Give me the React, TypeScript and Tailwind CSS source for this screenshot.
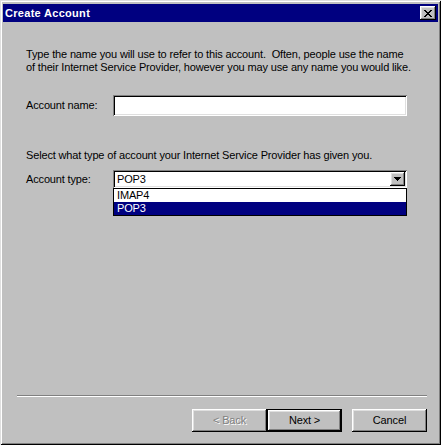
import React from 'react';

const raised =
  'shadow-[inset_-1px_-1px_#000,inset_1px_1px_#fff,inset_-2px_-2px_#808080,inset_2px_2px_#dfdfdf]';
const sunken =
  'shadow-[inset_1px_1px_#808080,inset_-1px_-1px_#fff,inset_2px_2px_#000,inset_-2px_-2px_#dfdfdf]';

const Btn: React.FC<{ label: string; disabled?: boolean; isDefault?: boolean }> = ({ label, disabled, isDefault }) => (
  <div
    className={`w-[75px] h-[23px] flex items-center justify-center bg-[#c0c0c0] ${
      isDefault
        ? 'border border-black shadow-[inset_-1px_-1px_#000,inset_1px_1px_#fff,inset_-2px_-2px_#808080,inset_2px_2px_#dfdfdf]'
        : raised
    }`}
  >
    <span className={disabled ? 'text-[#808080] [text-shadow:1px_1px_0_#fff]' : 'text-black'}>{label}</span>
  </div>
);

export default function App() {
  return (
    <div
      className="w-[441px] h-[445px] bg-[#c0c0c0] p-[3px] flex flex-col text-[11px] leading-[13px] tracking-[-0.15px] text-black shadow-[inset_1px_1px_#dfdfdf,inset_-1px_-1px_#000,inset_2px_2px_#fff,inset_-2px_-2px_#808080]"
      style={{ fontFamily: '"Liberation Sans", Arial, sans-serif' }}
    >
      {/* title bar */}
      <div className="mt-[1px] h-[18px] bg-[#000080] flex items-center justify-between pl-[2px] pr-[2px]">
        <span className="text-white font-bold text-[11px] tracking-[0.3px]">Create Account</span>
        <div className={`w-[16px] h-[14px] bg-[#c0c0c0] flex items-center justify-center ${raised}`}>
          <svg width="8" height="7" viewBox="0 0 8 7" shapeRendering="crispEdges">
            <path
              d="M0 0h2v1h-2zM6 0h2v1h-2zM1 1h2v1h-2zM5 1h2v1h-2zM2 2h4v1h-4zM3 3h2v1h-2zM2 4h4v1h-4zM1 5h2v1h-2zM5 5h2v1h-2zM0 6h2v1h-2zM6 6h2v1h-2z"
              fill="#000"
            />
          </svg>
        </div>
      </div>

      {/* body */}
      <div className="flex-1 flex flex-col pl-[23px] pr-[11px]">
        <p className="mt-[26px] whitespace-nowrap">
          Type the name you will use to refer to this account.&nbsp; Often, people use the name
          <br />
          of their Internet Service Provider, however you may use any name you would like.
        </p>

        <div className="mt-[21px] flex items-center h-[21px]">
          <span className="w-[87px]">Account name:</span>
          <div className={`w-[294px] h-[21px] bg-white ${sunken}`} />
        </div>

        <p className="mt-[33px] whitespace-nowrap">
          Select what type of account your Internet Service Provider has given you.
        </p>

        <div className="mt-[8px] flex items-start">
          <span className="w-[87px] mt-[3px]">Account type:</span>
          <div className="relative w-[294px]">
            <div className={`h-[18px] bg-white flex items-center justify-between pl-[4px] pr-[2px] ${sunken}`}>
              <span>POP3</span>
              <div className={`w-[15px] h-[14px] bg-[#c0c0c0] flex items-center justify-center ${raised}`}>
                <svg width="7" height="4" viewBox="0 0 7 4" shapeRendering="crispEdges">
                  <path d="M0 0h7v1h-7zM1 1h5v1h-5zM2 2h3v1h-3zM3 3h1v1h-1z" fill="#000" />
                </svg>
              </div>
            </div>
            <div className="absolute left-0 top-[18px] w-[294px] bg-white border border-black">
              <div className="h-[13px] pl-[3px] flex items-center">IMAP4</div>
              <div className="h-[13px] pl-[3px] flex items-center bg-[#000080] text-white">POP3</div>
            </div>
          </div>
        </div>

        <div className="flex-1" />

        {/* separator */}
        <div className="ml-[-9px] h-[2px] border-t border-[#808080] border-b border-b-white" />

        <div className="mt-[12px] mb-[10px] flex justify-end">
          <Btn label="< Back" disabled />
          <Btn label="Next >" isDefault />
          <div className="w-[10px]" />
          <Btn label="Cancel" />
        </div>
      </div>
    </div>
  );
}
